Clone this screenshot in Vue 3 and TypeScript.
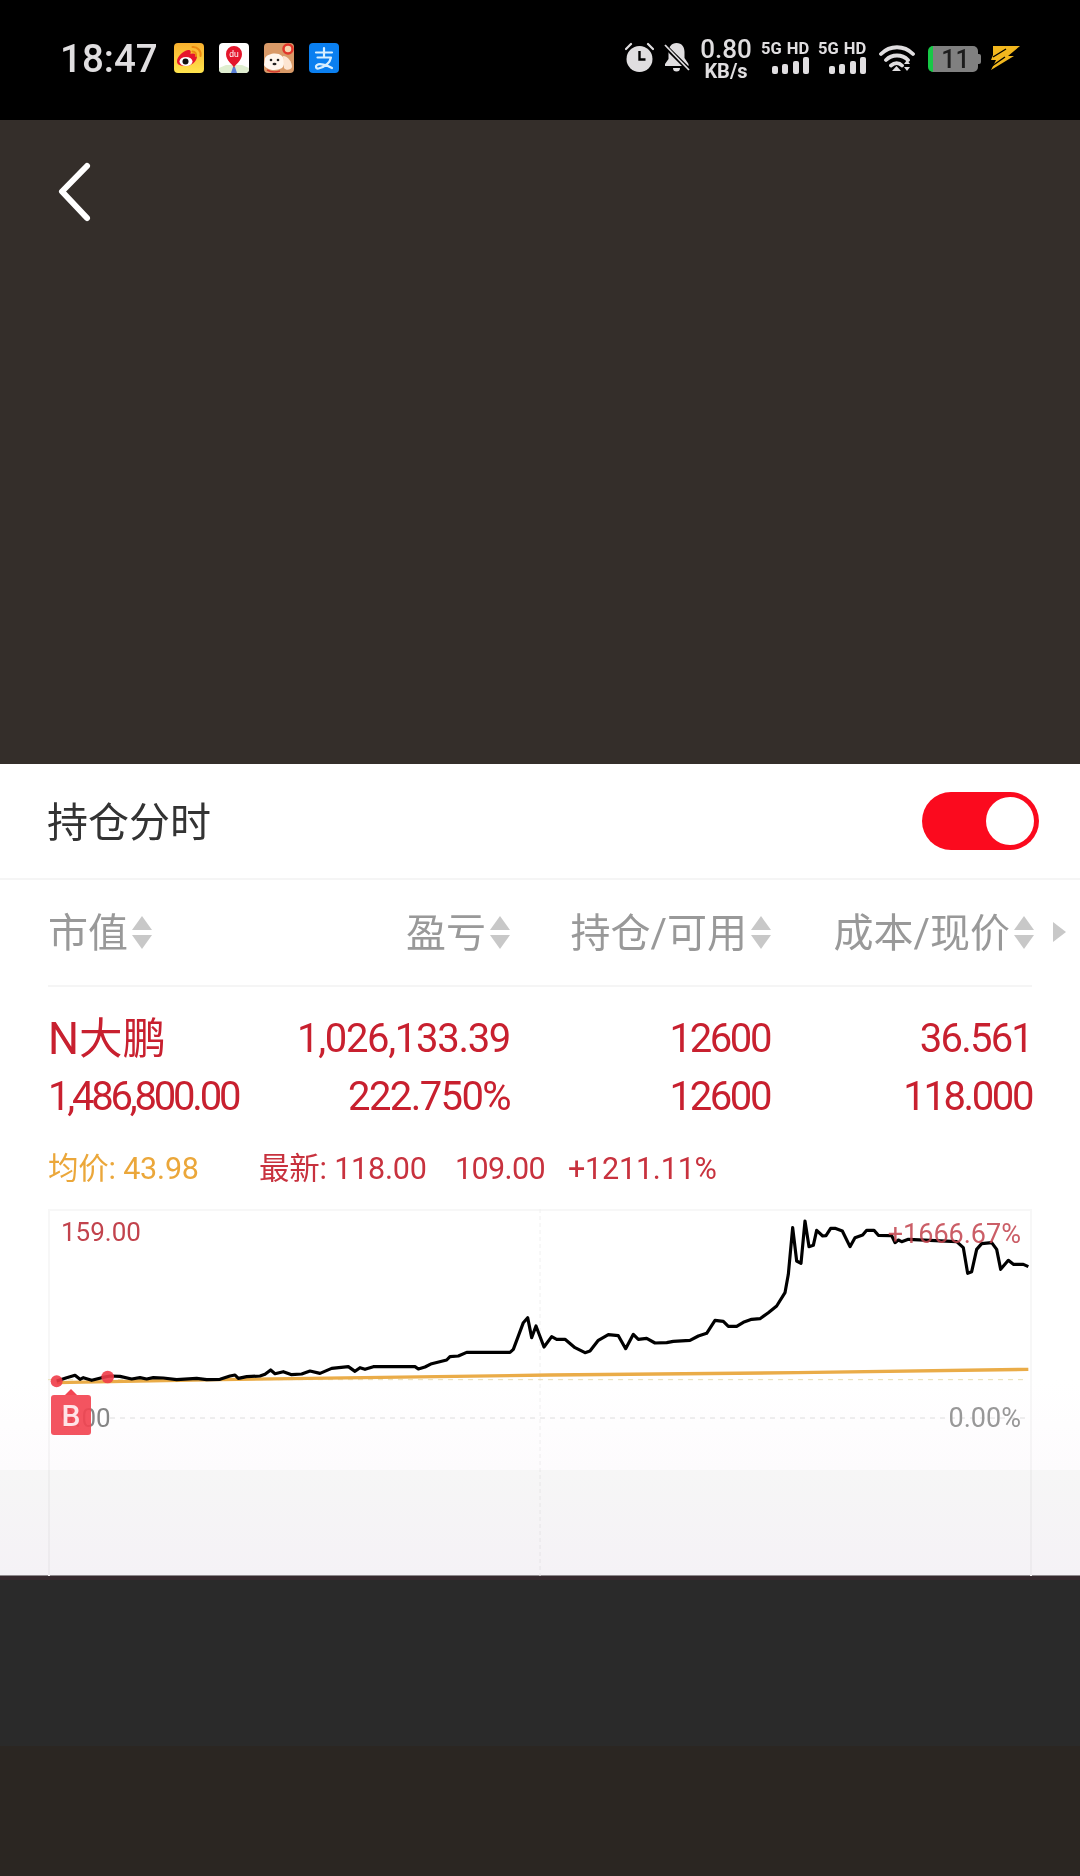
<script setup lang="ts">
type Cell = { text: string; ls: number; name?: boolean }

const headers = [
  { label: '市值', cls: 'col-a' },
  { label: '盈亏', cls: 'col-b' },
  { label: '持仓/可用', cls: 'col-c' },
  { label: '成本/现价', cls: 'col-d' },
]

// the source font is narrower than Roboto, ls squeezes each value to its real width
const rows: Cell[][] = [
  [
    { text: 'N大鹏', ls: 0, name: true },
    { text: '1,026,133.39', ls: -1.3 },
    { text: '12600', ls: -2.4 },
    { text: '36.561', ls: -1.8 },
  ],
  [
    { text: '1,486,800.00', ls: -3.2 },
    { text: '222.750%', ls: -1.6 },
    { text: '12600', ls: -2.4 },
    { text: '118.000', ls: -2.4 },
  ],
]

// traced at 3x, so the viewBox below is 3 units to a pixel
const pricePts =
  '80,540 110,530 135,523 150,535 160,530 185,538 215,530 240,525 270,526 305,534 330,530 350,534 370,530 400,531 440,536 500,532 530,536 570,535 600,525 615,522 625,532 650,527 690,525 705,520 722,507 735,518 760,512 785,521 815,519 840,510 870,517 905,502 955,497 975,511 990,500 1005,505 1030,497 1155,497 1165,504 1185,498 1205,488 1250,477 1260,467 1285,465 1310,454 1440,454 1450,445 1480,365 1493,350 1505,410 1518,375 1542,438 1565,407 1580,415 1605,415 1635,440 1665,455 1680,450 1705,418 1735,401 1765,404 1787,443 1810,400 1825,415 1850,412 1875,426 1910,425 1930,421 1980,418 2005,405 2030,397 2055,358 2080,361 2095,376 2120,376 2140,364 2165,355 2190,353 2215,335 2240,315 2265,275 2275,220 2288,80 2300,180 2313,187 2325,60 2337,137 2350,133 2360,88 2378,105 2388,104 2402,82 2415,82 2437,90 2460,137 2475,110 2498,102 2510,88 2532,88 2545,103 2585,104 2595,125 2605,117 2615,122 2635,115 2780,122 2800,140 2813,217 2825,212 2840,145 2855,128 2885,125 2900,145 2912,205 2935,178 2950,190 2980,190 2995,197'
</script>

<template>
  <div class="screen">
    <div class="status">
      <span class="time">18:47</span>
      <div class="apps">
        <svg class="app" viewBox="0 0 30 30">
          <defs>
            <linearGradient id="wb" x1="0" y1="0" x2="0" y2="1">
              <stop offset="0" stop-color="#f9b02e" />
              <stop offset="1" stop-color="#ffe54d" />
            </linearGradient>
          </defs>
          <rect width="30" height="30" rx="4" fill="url(#wb)" />
          <path d="M3 18.500c0-5 6-10.500 11-11.500 3-.5 3 2 2.500 4 3-1 6.500-.5 6.500 2.500 0 5-6 9.500-11 9.500-5 0-9-1-9-4.500z" fill="#e6162d" />
          <ellipse cx="12" cy="18.500" rx="6.500" ry="4.500" fill="#fff" />
          <circle cx="11.500" cy="18.500" r="3" fill="#111" />
          <path d="M18.500 4a7.500 7.500 0 0 1 8 9M18.500 8.500a3.500 3.500 0 0 1 3.500 4.500" fill="none" stroke="#ee8a10" stroke-width="2" stroke-linecap="round" />
        </svg>
        <svg class="app" viewBox="0 0 30 30">
          <rect width="30" height="30" rx="4" fill="#fff" />
          <path d="M0 25l7-3h16l7 3v1a4 4 0 0 1-4 4H4a4 4 0 0 1-4-4z" fill="#dfeed0" />
          <path d="M12 30l2-6h2l2 6z" fill="#5a7fd8" />
          <path d="M15 25c-1.200-4-8-7-8-14a8 8 0 0 1 16 0c0 7-6.800 10-8 14z" fill="#e4162c" />
          <text x="15" y="13.500" class="du">du</text>
        </svg>
        <svg class="app" viewBox="0 0 30 30">
          <rect width="30" height="30" rx="4" fill="#d99a68" />
          <path d="M1 15c3-5 13-6 17-2 3 3 3 9 0 12-5 3-15 3-18-3z" fill="#fff6ee" />
          <path d="M19 13c5 0 9 6 9 11-1 3-6 4-8 1z" fill="#fde5d2" />
          <circle cx="7" cy="17" r="1.300" fill="#222" />
          <circle cx="14" cy="17" r="1.300" fill="#222" />
          <ellipse cx="10.500" cy="21" rx="2" ry="1.300" fill="#222" />
          <circle cx="24" cy="6" r="4.500" fill="#f7d6b0" stroke="#e2352a" stroke-width="2.500" />
          <path d="M3 27c5 3 10 2 13 1" fill="none" stroke="#d63a2c" stroke-width="1.500" />
        </svg>
        <svg class="app" viewBox="0 0 30 30">
          <rect width="30" height="30" rx="4" fill="#0a7ff0" />
          <path d="M7 9.500h16M15 5v9M8.500 14.500h13.500c-1 5-5.500 9-12.500 11-2.500.5-3.500-2-1.500-3.500 2.500-2 9.500 0 15 3" fill="none" stroke="#d8efff" stroke-width="2.200" stroke-linecap="round" stroke-linejoin="round" />
        </svg>
      </div>
      <div class="sys">
        <svg class="alarm" viewBox="0 0 29 30">
          <circle cx="14.500" cy="17" r="13" fill="#e0dee0" />
          <path d="M14.500 9v8.500h6" fill="none" stroke="#000" stroke-width="2.400" />
          <path d="M1 7l5-5M28 7l-5-5" stroke="#e0dee0" stroke-width="2.200" stroke-linecap="round" />
        </svg>
        <svg class="bell" viewBox="0 0 27 30">
          <path d="M13.500 1c5.500 0 8 4 8 9v6l4 6v2H2v-2l3.500-5v-7c0-5 3-9 8-9zM10 26h7a3.500 3.500 0 0 1-7 0z" fill="#e0dee0" />
          <path d="M2 4l24 24" stroke="#000" stroke-width="4.500" />
          <path d="M2 3l24 25" stroke="#e0dee0" stroke-width="1.800" />
        </svg>
        <div class="speed">
          <span class="speed-num">0.80</span>
          <span class="speed-unit">KB/s</span>
        </div>
        <div class="sim">
          <span class="sim-label">5G HD</span>
          <div class="bars"><i class="b1"></i><i class="b2"></i><i class="b3"></i><i class="b4"></i></div>
        </div>
        <div class="sim sim-two">
          <span class="sim-label">5G HD</span>
          <div class="bars"><i class="b1"></i><i class="b2"></i><i class="b3"></i><i class="b4"></i></div>
        </div>
        <svg class="wifi" viewBox="0 0 36 28">
          <path d="M2 9c9-9 23-9 32 0M7 15c6-6 16-6 22 0M12 20.500c3.500-3 8-3 11 0" fill="none" stroke="#e0dee0" stroke-width="3.800" stroke-linecap="round" />
          <path d="M17.500 21l4.500 5h-9zM28 15l3 4h-6zM25 22h6l-3 4z" fill="#e0dee0" />
        </svg>
        <div class="battery">
          <div class="battery-body"><span>11</span></div>
          <div class="battery-cap"></div>
        </div>
        <svg class="bolt" viewBox="0 0 30 24">
          <path d="M3 0h27L18 10h6L1 24l5-10H1l2-5z" fill="#f2b71e" />
          <path d="M3 11l13-8M2 20l13-9" stroke="#000" stroke-width="1.400" />
        </svg>
      </div>
    </div>

    <div class="backdrop">
      <svg class="back" viewBox="0 0 38 62">
        <path d="M33 5L8 30.500 33 57" fill="none" stroke="#fff" stroke-width="6" stroke-linecap="round" stroke-linejoin="round" />
      </svg>
    </div>

    <div class="sheet">
      <div class="sheet-head">
        <span class="sheet-title">持仓分时</span>
        <div class="toggle"><div class="knob"></div></div>
      </div>

      <div class="table">
        <div class="thead">
          <div v-for="h in headers" :key="h.label" class="th" :class="h.cls">
            <span>{{ h.label }}</span>
            <span class="sort"><i class="up"></i><i class="down"></i></span>
          </div>
          <i class="more"></i>
        </div>
        <div class="tbody">
          <div v-for="(r, i) in rows" :key="i" class="tr">
            <span
              v-for="(c, j) in r"
              :key="j"
              class="td"
              :class="[headers[j].cls, { name: c.name }]"
              :style="{ letterSpacing: c.ls + 'px' }"
            >{{ c.text }}</span>
          </div>
        </div>
        <div class="quote">
          <span class="avg">均价: 43.98</span>
          <span class="latest">最新: 118.00</span>
          <span class="prev">109.00</span>
          <span>+1211.11%</span>
        </div>
      </div>

      <div class="chart">
        <svg class="plot" viewBox="54 24 2952 1101" preserveAspectRatio="none">
          <line x1="1530" y1="24" x2="1530" y2="1125" class="mid" />
          <line x1="54" y1="536" x2="2990" y2="536" class="open" />
          <line x1="240" y1="651" x2="2990" y2="651" class="zero" />
          <polyline points="80,545 570,536 1560,522 2300,515 2995,505" class="avg-line" />
          <polyline :points="pricePts" class="price" />
          <circle cx="80" cy="541" r="18" class="dot" />
          <circle cx="233" cy="528" r="19" class="dot" />
        </svg>
        <span class="lbl high">159.00</span>
        <span class="lbl high-pct">+1666.67%</span>
        <span class="lbl low">9.00</span>
        <div class="badge"><span>B</span></div>
        <span class="lbl low-pct">0.00%</span>
      </div>
      <div class="shade"></div>
    </div>

    <div class="foot-a"></div>
    <div class="foot-b"></div>
  </div>
</template>

<style>
html, body { margin: 0; background: #000; }
</style>

<style scoped>
.screen {
  width: 1080px;
  height: 1876px;
  display: flex;
  flex-direction: column;
  font-family: Roboto, "Noto Sans CJK SC", sans-serif;
  overflow: hidden;
}

.status {
  height: 120px;
  background: #000;
  display: flex;
  align-items: center;
  padding: 0 60px;
  box-sizing: border-box;
  color: #e0dee0;
  flex: none;
}
.time { font-size: 38.500px; font-weight: 500; width: 114px; margin-top: -4px; flex: none; }
.apps { display: flex; gap: 15px; margin-top: -4px; flex: none; }
.app { width: 30px; height: 30px; display: block; }
.du { font: 8.500px "Liberation Sans", sans-serif; fill: #fff; text-anchor: middle; }

.sys { margin-left: 286px; display: flex; align-items: flex-start; height: 32px; position: relative; width: 396px; margin-top: -4px; flex: none; }
.alarm { width: 29px; height: 30px; flex: none; }
.bell { width: 27px; height: 30px; margin-left: 9px; flex: none; }
.speed { width: 52px; margin-left: 10px; text-align: center; display: flex; flex-direction: column; flex: none; margin-top: -5px; }
.speed-num { font-size: 26px; line-height: 25px; font-weight: 500; }
.speed-unit { font-size: 20px; line-height: 18px; font-weight: 700; }
.sim { width: 48px; margin-left: 9px; flex: none; text-align: right; margin-top: -1px; }
.sim-two { margin-left: 9px; }
.sim-label { display: block; font-size: 16.500px; line-height: 16px; font-weight: 700; white-space: nowrap; word-spacing: 1px; }
.bars { display: flex; gap: 4.500px; justify-content: flex-end; align-items: flex-end; height: 17px; }
.bars i { width: 6px; background: #e0dee0; border-radius: 2px; display: block; }
.b1 { height: 8px; }
.b2 { height: 10px; }
.b3 { height: 13px; }
.b4 { height: 17px; }
.wifi { width: 36px; height: 28px; margin-left: 13px; margin-top: 3px; flex: none; }
.battery { display: flex; align-items: center; margin-left: 13px; height: 26px; flex: none; margin-top: 4px; }
.battery-body {
  width: 50px;
  height: 26px;
  border-radius: 5px;
  background: #808080;
  border-left: 5px solid #17c846;
  box-sizing: border-box;
  display: flex;
  align-items: center;
  justify-content: center;
  color: #1c1c1c;
  font-size: 25px;
  font-weight: 500;
}
.battery-cap { width: 3px; height: 10px; background: #808080; border-radius: 0 2px 2px 0; }
.bolt { width: 30px; height: 24px; margin-left: 9px; margin-top: 4px; flex: none; }

.backdrop { height: 644px; background: #342e2a; flex: none; }
.back { display: block; width: 38px; height: 62px; margin: 41px 0 0 54px; }

.sheet { height: 811px; background: #fff; flex: none; position: relative; }
.sheet-head {
  height: 114px;
  border-bottom: 2px solid #f5f5f5;
  display: flex;
  align-items: center;
  justify-content: space-between;
  padding: 0 41px 0 47px;
}
.sheet-title { font-size: 41px; color: #333; margin-bottom: 4px; }
.toggle {
  width: 117px;
  height: 58px;
  border-radius: 29px;
  background: #fb0a1e;
  display: flex;
  align-items: center;
  justify-content: flex-end;
  padding-right: 5px;
  box-sizing: border-box;
}
.knob { width: 48px; height: 48px; border-radius: 50%; background: #fff; }

.table { padding: 0 48px; }
.thead {
  height: 107px;
  box-sizing: border-box;
  padding-bottom: 6px;
  border-bottom: 2px solid #f5f5f5;
  display: flex;
  align-items: center;
  position: relative;
  color: #999;
  font-size: 40px;
}
.th { display: flex; align-items: center; justify-content: flex-end; white-space: nowrap; }
.th .sort { display: flex; flex-direction: column; gap: 5px; margin: 6px 0 0 4px; width: 20px; flex: none; }
.up { border: 10px solid transparent; border-top: 0; border-bottom: 14px solid #c8c8c8; display: block; width: 0; }
.down { border: 10px solid transparent; border-bottom: 0; border-top: 14px solid #c8c8c8; display: block; width: 0; }
.col-a { width: 110px; justify-content: flex-start; }
.th.col-b { width: 352px; }
.th.col-c { width: 261px; }
.th.col-d { width: 263px; margin-right: -2px; }
.more {
  position: absolute;
  right: -34px;
  top: 42px;
  border: 10px solid transparent;
  border-right: 0;
  border-left: 13px solid #c8c8c8;
}

.tbody { padding-top: 22px; }
.tr { display: flex; height: 58px; align-items: center; color: #c8202f; font-size: 40px; }
.td { text-align: right; white-space: nowrap; flex: none; }
.td.col-a { width: 200px; text-align: left; }
.td.col-b { width: 262px; }
.td.col-c { width: 260px; }
.td.col-d { width: 262px; }
.td.name { font-size: 43.500px; margin-top: -6px; }

.quote { display: flex; align-items: baseline; height: 40px; margin-top: 19px; font-size: 30.500px; color: #c8323e; letter-spacing: -.2px; }
.avg { color: #eba73a; width: 211px; flex: none; }
.latest { width: 196px; flex: none; }
.prev { width: 113px; flex: none; letter-spacing: -.6px; }

.chart {
  position: relative;
  margin: 25px 48px 0 48px;
  height: 367px;
  border: 2px solid #f7f7f7;
  border-bottom: 0;
  box-sizing: border-box;
  width: 984px;
}
.plot { position: absolute; left: -2px; top: -2px; width: 984px; height: 367px; overflow: visible; }
.mid { stroke: #f0f0f0; stroke-width: 3; stroke-dasharray: 12 9; }
.open { stroke: #e9dfb4; stroke-width: 3; stroke-dasharray: 15 15; }
.zero { stroke: #dedede; stroke-width: 3; stroke-dasharray: 15 15; }
.avg-line { fill: none; stroke: #eaac48; stroke-width: 10; }
.price { fill: none; stroke: #000; stroke-width: 9.500; stroke-linejoin: round; }
.dot { fill: #f03c48; opacity: .9; }

.lbl { position: absolute; font-size: 26px; line-height: 30px; white-space: nowrap; }
.high { left: 11px; top: 6px; color: #c2434d; }
.high-pct { right: 9px; top: 8px; color: #c2434d; opacity: .85; font-size: 27px; }
.low { left: 10px; top: 192px; color: #868686; }
.low-pct { right: 9px; top: 192px; color: #999; font-size: 27px; }
.badge {
  position: absolute;
  left: 1px;
  top: 184px;
  width: 40px;
  height: 40px;
  border-radius: 3px;
  background: rgba(243, 69, 82, .92);
  color: #ffe5e7;
  font-size: 30px;
  font-weight: 500;
  display: flex;
  align-items: center;
  justify-content: center;
}
.badge::before {
  content: "";
  position: absolute;
  left: 14px;
  top: -6px;
  border: 6px solid transparent;
  border-top: 0;
  border-bottom: 6px solid #f34552;
}

.shade {
  position: absolute;
  left: 0;
  right: 0;
  top: 616px;
  bottom: 0;
  background: linear-gradient(#fff 0, #fdfbfd 90px, #f6f6f6 90px, #f5f2f6 195px);
  mix-blend-mode: multiply;
  pointer-events: none;
}

.foot-a { height: 171px; background: linear-gradient(#8e898c 0 1px, #362a2e 1px 5px, #2a2a2a 5px); flex: none; }
.foot-b { flex: 1; background: #2b2622; }
</style>
